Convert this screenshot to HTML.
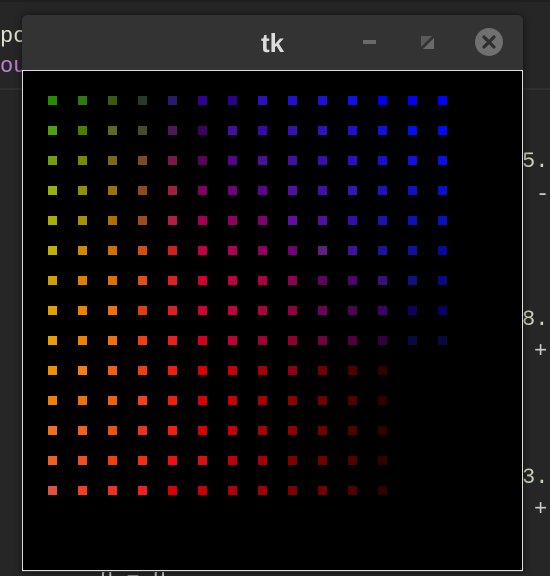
<!DOCTYPE html>
<html><head><meta charset="utf-8"><style>
html,body{margin:0;padding:0;width:550px;height:576px;overflow:hidden;background:#262626;font-family:"Liberation Sans",sans-serif;position:relative}
.t{position:absolute;font-family:"Liberation Mono",monospace;font-size:22px;color:#c8d4b8}
#win{position:absolute;left:22px;top:15px;width:501px;height:557px;background:#333;border-radius:5px 5px 0 0;box-shadow:0 0 8px rgba(0,0,0,.6)}
#title{position:absolute;left:0;width:100%;top:13px;text-align:center;font-weight:bold;font-size:26px;color:#dcdcdc}
#cv{position:absolute;left:0;top:55px;width:499px;height:499px;background:#000;border:1px solid #ddd}
</style></head><body>
<div style="position:absolute;left:0;top:0;width:550px;height:2px;background:#1e1e1e"></div>
<div style="position:absolute;left:0;top:88px;width:550px;height:2px;background:#303030"></div>
<div class="t" style="left:0;top:24px;color:#e0e0d0">po</div>
<div class="t" style="left:0;top:54px;color:#c080d0">ou</div>
<div class="t" style="left:522px;top:149px">5.</div>
<div class="t" style="left:536px;top:182px;color:#ccc">-</div>
<div class="t" style="left:522px;top:307px">8.</div>
<div class="t" style="left:534px;top:339px;color:#ccc">+</div>
<div class="t" style="left:522px;top:465px">3.</div>
<div class="t" style="left:534px;top:497px;color:#ccc">+</div>
<div class="t" style="left:100px;top:563px;color:#ccc">n = n</div>
<div id="win">
<div id="title">tk</div>
<div style="position:absolute;left:341px;top:25px;width:13px;height:4px;background:#6a6a6a"></div>
<svg style="position:absolute;left:399px;top:21px" width="14" height="14"><polygon points="0,0 11,0 0,11" fill="#5a5a5a"/><polygon points="13,2 13,13 2,13" fill="#6a6a6a"/></svg>
<svg style="position:absolute;left:452px;top:12px" width="30" height="30"><circle cx="15" cy="15" r="14" fill="#707070"/><path d="M10 10L20 20M20 10L10 20" stroke="#2e2e2e" stroke-width="3.2" stroke-linecap="round"/></svg>
<div id="cv"></div>
</div>
<svg style="position:absolute;left:48px;top:96px" width="400" height="400">
<defs><rect id="s" width="9" height="9"/></defs>
<g transform="translate(0,0)"><use href="#s" x="0" fill="#2a8a00"/><use href="#s" x="30" fill="#2f7a10"/><use href="#s" x="60" fill="#3a5a10"/><use href="#s" x="90" fill="#2a3a2a"/><use href="#s" x="120" fill="#2a1a6a"/><use href="#s" x="150" fill="#300090"/><use href="#s" x="180" fill="#2a0090"/><use href="#s" x="210" fill="#2a10c0"/><use href="#s" x="240" fill="#2010d0"/><use href="#s" x="270" fill="#1a10d8"/><use href="#s" x="300" fill="#1010e8"/><use href="#s" x="330" fill="#0000f8"/><use href="#s" x="360" fill="#0000f8"/><use href="#s" x="390" fill="#0000ff"/></g>
<g transform="translate(0,30)"><use href="#s" x="0" fill="#50a010"/><use href="#s" x="30" fill="#4a8000"/><use href="#s" x="60" fill="#5a6a20"/><use href="#s" x="90" fill="#4a4a2a"/><use href="#s" x="120" fill="#4a1a5a"/><use href="#s" x="150" fill="#400060"/><use href="#s" x="180" fill="#4010a0"/><use href="#s" x="210" fill="#3808b0"/><use href="#s" x="240" fill="#3810b0"/><use href="#s" x="270" fill="#3010c0"/><use href="#s" x="300" fill="#2010d0"/><use href="#s" x="330" fill="#1010e0"/><use href="#s" x="360" fill="#0010f0"/><use href="#s" x="390" fill="#0008f8"/></g>
<g transform="translate(0,60)"><use href="#s" x="0" fill="#70a010"/><use href="#s" x="30" fill="#7a8a00"/><use href="#s" x="60" fill="#7a6a20"/><use href="#s" x="90" fill="#7a4a2a"/><use href="#s" x="120" fill="#7a1a4a"/><use href="#s" x="150" fill="#5a0060"/><use href="#s" x="180" fill="#5a0090"/><use href="#s" x="210" fill="#4a10a0"/><use href="#s" x="240" fill="#4010a0"/><use href="#s" x="270" fill="#3810b0"/><use href="#s" x="300" fill="#2810c8"/><use href="#s" x="330" fill="#1810d0"/><use href="#s" x="360" fill="#1010e0"/><use href="#s" x="390" fill="#0810e8"/></g>
<g transform="translate(0,90)"><use href="#s" x="0" fill="#98b010"/><use href="#s" x="30" fill="#909000"/><use href="#s" x="60" fill="#9a7010"/><use href="#s" x="90" fill="#904a20"/><use href="#s" x="120" fill="#a02040"/><use href="#s" x="150" fill="#800060"/><use href="#s" x="180" fill="#700080"/><use href="#s" x="210" fill="#600090"/><use href="#s" x="240" fill="#5010a0"/><use href="#s" x="270" fill="#4010a8"/><use href="#s" x="300" fill="#3018b8"/><use href="#s" x="330" fill="#2010c0"/><use href="#s" x="360" fill="#1010c8"/><use href="#s" x="390" fill="#0810d0"/></g>
<g transform="translate(0,120)"><use href="#s" x="0" fill="#a8b000"/><use href="#s" x="30" fill="#a89000"/><use href="#s" x="60" fill="#b07000"/><use href="#s" x="90" fill="#a04a20"/><use href="#s" x="120" fill="#b02040"/><use href="#s" x="150" fill="#a00050"/><use href="#s" x="180" fill="#900060"/><use href="#s" x="210" fill="#800070"/><use href="#s" x="240" fill="#6010a0"/><use href="#s" x="270" fill="#5010a0"/><use href="#s" x="300" fill="#3010a8"/><use href="#s" x="330" fill="#2010b0"/><use href="#s" x="360" fill="#1010b8"/><use href="#s" x="390" fill="#0810c0"/></g>
<g transform="translate(0,150)"><use href="#s" x="0" fill="#c0b000"/><use href="#s" x="30" fill="#d08800"/><use href="#s" x="60" fill="#d07000"/><use href="#s" x="90" fill="#d05010"/><use href="#s" x="120" fill="#d02020"/><use href="#s" x="150" fill="#c00040"/><use href="#s" x="180" fill="#b00050"/><use href="#s" x="210" fill="#900060"/><use href="#s" x="240" fill="#700070"/><use href="#s" x="270" fill="#602080"/><use href="#s" x="300" fill="#4010a0"/><use href="#s" x="330" fill="#2010a0"/><use href="#s" x="360" fill="#1010a0"/><use href="#s" x="390" fill="#0808a0"/></g>
<g transform="translate(0,180)"><use href="#s" x="0" fill="#d0a000"/><use href="#s" x="30" fill="#e08000"/><use href="#s" x="60" fill="#e07000"/><use href="#s" x="90" fill="#e05010"/><use href="#s" x="120" fill="#e02020"/><use href="#s" x="150" fill="#d00030"/><use href="#s" x="180" fill="#c00040"/><use href="#s" x="210" fill="#b00040"/><use href="#s" x="240" fill="#900050"/><use href="#s" x="270" fill="#600060"/><use href="#s" x="300" fill="#500070"/><use href="#s" x="330" fill="#3a1080"/><use href="#s" x="360" fill="#101080"/><use href="#s" x="390" fill="#080880"/></g>
<g transform="translate(0,210)"><use href="#s" x="0" fill="#e0a000"/><use href="#s" x="30" fill="#f08000"/><use href="#s" x="60" fill="#f07010"/><use href="#s" x="90" fill="#e04010"/><use href="#s" x="120" fill="#e02020"/><use href="#s" x="150" fill="#d00030"/><use href="#s" x="180" fill="#c00040"/><use href="#s" x="210" fill="#b00040"/><use href="#s" x="240" fill="#900040"/><use href="#s" x="270" fill="#700060"/><use href="#s" x="300" fill="#500050"/><use href="#s" x="330" fill="#3a0070"/><use href="#s" x="360" fill="#100060"/><use href="#s" x="390" fill="#080068"/></g>
<g transform="translate(0,240)"><use href="#s" x="0" fill="#e8a000"/><use href="#s" x="30" fill="#f08000"/><use href="#s" x="60" fill="#f07010"/><use href="#s" x="90" fill="#f04010"/><use href="#s" x="120" fill="#e82020"/><use href="#s" x="150" fill="#d00020"/><use href="#s" x="180" fill="#c00030"/><use href="#s" x="210" fill="#a00030"/><use href="#s" x="240" fill="#900030"/><use href="#s" x="270" fill="#700040"/><use href="#s" x="300" fill="#500040"/><use href="#s" x="330" fill="#300040"/><use href="#s" x="360" fill="#0a0840"/><use href="#s" x="390" fill="#080840"/></g>
<g transform="translate(0,270)"><use href="#s" x="0" fill="#f09000"/><use href="#s" x="30" fill="#f08010"/><use href="#s" x="60" fill="#f06010"/><use href="#s" x="90" fill="#f04010"/><use href="#s" x="120" fill="#f02010"/><use href="#s" x="150" fill="#d80000"/><use href="#s" x="180" fill="#c80000"/><use href="#s" x="210" fill="#a80000"/><use href="#s" x="240" fill="#900010"/><use href="#s" x="270" fill="#700000"/><use href="#s" x="300" fill="#500000"/><use href="#s" x="330" fill="#300000"/></g>
<g transform="translate(0,300)"><use href="#s" x="0" fill="#f08000"/><use href="#s" x="30" fill="#f07010"/><use href="#s" x="60" fill="#f06010"/><use href="#s" x="90" fill="#f04020"/><use href="#s" x="120" fill="#f02010"/><use href="#s" x="150" fill="#d80000"/><use href="#s" x="180" fill="#c80000"/><use href="#s" x="210" fill="#a80000"/><use href="#s" x="240" fill="#900000"/><use href="#s" x="270" fill="#700000"/><use href="#s" x="300" fill="#500000"/><use href="#s" x="330" fill="#300000"/></g>
<g transform="translate(0,330)"><use href="#s" x="0" fill="#f07020"/><use href="#s" x="30" fill="#f06020"/><use href="#s" x="60" fill="#f05010"/><use href="#s" x="90" fill="#f03020"/><use href="#s" x="120" fill="#f02010"/><use href="#s" x="150" fill="#d80000"/><use href="#s" x="180" fill="#c80000"/><use href="#s" x="210" fill="#a80000"/><use href="#s" x="240" fill="#900000"/><use href="#s" x="270" fill="#700000"/><use href="#s" x="300" fill="#500000"/><use href="#s" x="330" fill="#300000"/></g>
<g transform="translate(0,360)"><use href="#s" x="0" fill="#f06020"/><use href="#s" x="30" fill="#f05020"/><use href="#s" x="60" fill="#f04010"/><use href="#s" x="90" fill="#f03010"/><use href="#s" x="120" fill="#f01010"/><use href="#s" x="150" fill="#d81010"/><use href="#s" x="180" fill="#c00000"/><use href="#s" x="210" fill="#a80000"/><use href="#s" x="240" fill="#800000"/><use href="#s" x="270" fill="#700000"/><use href="#s" x="300" fill="#500000"/><use href="#s" x="330" fill="#300000"/></g>
<g transform="translate(0,390)"><use href="#s" x="0" fill="#e05040"/><use href="#s" x="30" fill="#f04020"/><use href="#s" x="60" fill="#f03020"/><use href="#s" x="90" fill="#f02020"/><use href="#s" x="120" fill="#d80000"/><use href="#s" x="150" fill="#c80000"/><use href="#s" x="180" fill="#b00000"/><use href="#s" x="210" fill="#a00000"/><use href="#s" x="240" fill="#800000"/><use href="#s" x="270" fill="#700000"/><use href="#s" x="300" fill="#500000"/><use href="#s" x="330" fill="#300000"/></g>
</svg>
</body></html>
